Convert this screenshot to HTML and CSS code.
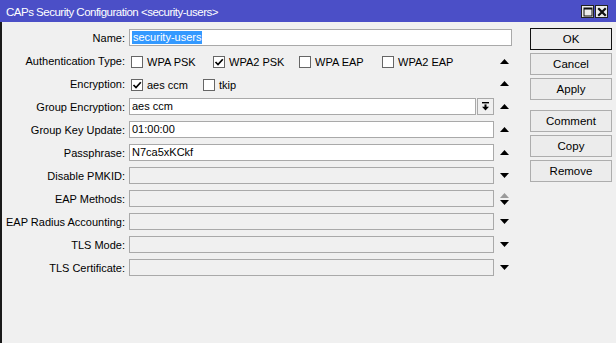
FILE: index.html
```html
<!DOCTYPE html>
<html>
<head>
<meta charset="utf-8">
<link rel="stylesheet" href="styles.css">
</head>
<body>
<div class="window">
  <div class="titlebar">
    <span class="title">CAPs Security Configuration &lt;security-users&gt;</span>
    <div class="tb-btns">
      <span class="tb-btn"><svg width="10" height="10" viewBox="0 0 10 10"><rect x="1" y="1" width="8" height="8" fill="none" stroke="#111" stroke-width="1"/><rect x="1" y="1" width="8" height="1.5" fill="#111"/></svg></span>
      <span class="tb-btn"><svg width="10" height="10" viewBox="0 0 10 10"><path d="M2 2 L8 8 M8 2 L2 8" stroke="#111" stroke-width="2.2" stroke-linecap="square"/></svg></span>
    </div>
  </div>
  <div class="main">
    <div class="form">
      <div class="row">
        <span class="label">Name:</span>
        <div class="field name-field"><span class="sel">security-users</span></div>
      </div>
      <div class="row">
        <span class="label">Authentication Type:</span>
        <div class="checks auth">
          <span class="check"><span class="box"></span>WPA PSK</span>
          <span class="check"><span class="box on"><svg width="10" height="10" viewBox="0 0 10 10"><path d="M1.5 5 L4 7.6 L8.8 2.2" fill="none" stroke="#000" stroke-width="1.7"/></svg></span>WPA2 PSK</span>
          <span class="check"><span class="box"></span>WPA EAP</span>
          <span class="check"><span class="box"></span>WPA2 EAP</span>
        </div>
        <span class="arrow up-row"><svg width="9" height="5" viewBox="0 0 9 5"><polygon points="0,5 9,5 4.5,0" fill="#000"/></svg></span>
      </div>
      <div class="row">
        <span class="label">Encryption:</span>
        <div class="checks enc">
          <span class="check"><span class="box on"><svg width="10" height="10" viewBox="0 0 10 10"><path d="M1.5 5 L4 7.6 L8.8 2.2" fill="none" stroke="#000" stroke-width="1.7"/></svg></span>aes ccm</span>
          <span class="check"><span class="box"></span>tkip</span>
        </div>
        <span class="arrow"><svg width="9" height="5" viewBox="0 0 9 5"><polygon points="0,5 9,5 4.5,0" fill="#000"/></svg></span>
      </div>
      <div class="row">
        <span class="label">Group Encryption:</span>
        <div class="combo">
          <div class="field">aes ccm</div>
          <span class="drop"><svg width="7" height="9" viewBox="0 0 7 9"><rect x="0" y="0" width="7" height="1.4" fill="#000"/><rect x="2.5" y="2.4" width="2" height="2.6" fill="#000"/><polygon points="0,4.8 7,4.8 3.5,8.5" fill="#000"/></svg></span>
        </div>
        <span class="arrow"><svg width="9" height="5" viewBox="0 0 9 5"><polygon points="0,5 9,5 4.5,0" fill="#000"/></svg></span>
      </div>
      <div class="row">
        <span class="label">Group Key Update:</span>
        <div class="field">01:00:00</div>
        <span class="arrow"><svg width="9" height="5" viewBox="0 0 9 5"><polygon points="0,5 9,5 4.5,0" fill="#000"/></svg></span>
      </div>
      <div class="row">
        <span class="label">Passphrase:</span>
        <div class="field">N7ca5xKCkf</div>
        <span class="arrow"><svg width="9" height="5" viewBox="0 0 9 5"><polygon points="0,5 9,5 4.5,0" fill="#000"/></svg></span>
      </div>
      <div class="row">
        <span class="label">Disable PMKID:</span>
        <div class="field off"></div>
        <span class="arrow"><svg width="9" height="5" viewBox="0 0 9 5"><polygon points="0,0 9,0 4.5,5" fill="#000"/></svg></span>
      </div>
      <div class="row">
        <span class="label">EAP Methods:</span>
        <div class="field off"></div>
        <span class="arrow"><svg width="9" height="12" viewBox="0 0 9 12"><polygon points="0,5 9,5 4.5,0" fill="#9a9a9a"/><polygon points="0,7 9,7 4.5,12" fill="#000"/></svg></span>
      </div>
      <div class="row">
        <span class="label">EAP Radius Accounting:</span>
        <div class="field off"></div>
        <span class="arrow"><svg width="9" height="5" viewBox="0 0 9 5"><polygon points="0,0 9,0 4.5,5" fill="#000"/></svg></span>
      </div>
      <div class="row">
        <span class="label">TLS Mode:</span>
        <div class="field off"></div>
        <span class="arrow"><svg width="9" height="5" viewBox="0 0 9 5"><polygon points="0,0 9,0 4.5,5" fill="#000"/></svg></span>
      </div>
      <div class="row">
        <span class="label">TLS Certificate:</span>
        <div class="field off"></div>
        <span class="arrow"><svg width="9" height="5" viewBox="0 0 9 5"><polygon points="0,0 9,0 4.5,5" fill="#000"/></svg></span>
      </div>
    </div>
    <div class="buttons">
      <span class="btn default">OK</span>
      <span class="btn">Cancel</span>
      <span class="btn">Apply</span>
      <span class="btn sep">Comment</span>
      <span class="btn">Copy</span>
      <span class="btn">Remove</span>
    </div>
  </div>
</div>
</body>
</html>
```

FILE: styles.css
```css
* { box-sizing: border-box; }
html, body { margin: 0; padding: 0; }
body {
  font-family: "Liberation Sans", Arial, sans-serif;
  font-size: 11px;
  color: #000;
  background: #f0f0f0;
}
.window {
  width: 616px;
  height: 343px;
  display: flex;
  flex-direction: column;
  background: #f0f0f0;
  overflow: hidden;
}
.titlebar {
  height: 22px;
  flex: 0 0 22px;
  background: #4b4fc7;
  color: #fff;
  display: flex;
  align-items: center;
  justify-content: space-between;
  padding: 0 8px 0 6px;
}
.title {
  font-size: 11.5px;
  letter-spacing: -0.5px;
  margin-top: 1px;
}
.tb-btns { display: flex; gap: 1px; margin-top: 1px; }
.tb-btn {
  width: 13px;
  height: 13px;
  background: #ececec;
  border: 1px solid #222;
  display: flex;
  align-items: center;
  justify-content: center;
}
.main {
  flex: 1;
  display: flex;
  border-left: 2px solid #1a1a1a;
}
.form {
  width: 514px;
  padding-top: 4px;
}
.row {
  display: grid;
  grid-template-columns: 127px 365px 22px;
  height: 23px;
  align-items: center;
}
.label {
  text-align: right;
  padding-right: 4px;
  white-space: nowrap;
}
.field {
  height: 17px;
  border: 1px solid #a9a9a9;
  background: #fff;
  padding: 0 2px;
  line-height: 15px;
  white-space: nowrap;
}
.field.off { background: #f0f0f0; }
.name-field {
  grid-column: 2 / span 2;
  width: 383px;
}
.sel {
  background: #3399ff;
  color: #fff;
  display: inline-block;
  line-height: 13px;
  padding: 0 1px;
}
.combo { display: flex; height: 17px; }
.combo .field { flex: 1; }
.drop {
  width: 17px;
  height: 17px;
  margin-left: 1px;
  border: 1px solid #a9a9a9;
  background: #f0f0f0;
  display: flex;
  align-items: center;
  justify-content: center;
}
.arrow {
  display: flex;
  justify-content: center;
  align-items: center;
  padding-right: 1px;
}
.arrow.up-row { padding-top: 2px; }
.checks {
  display: grid;
  padding-left: 2px;
  align-items: center;
  margin-top: 3px;
}
.checks.auth { grid-template-columns: 82px 86px 83px auto; }
.checks.enc { grid-template-columns: 72px auto; }
.check {
  display: flex;
  align-items: center;
  gap: 4px;
  white-space: nowrap;
}
.box {
  width: 12px;
  height: 12px;
  border: 1px solid #666;
  background: #fff;
  display: flex;
  align-items: center;
  justify-content: center;
}
.buttons {
  margin-left: 14px;
  padding-top: 6px;
  display: flex;
  flex-direction: column;
  gap: 3px;
}
.btn {
  width: 82px;
  height: 22px;
  border: 1px solid #adadad;
  background: #ececec;
  display: flex;
  align-items: center;
  justify-content: center;
  font-size: 11.5px;
}
.btn.default { border: 1px solid #111; }
.btn.sep { margin-top: 7px; }
```
